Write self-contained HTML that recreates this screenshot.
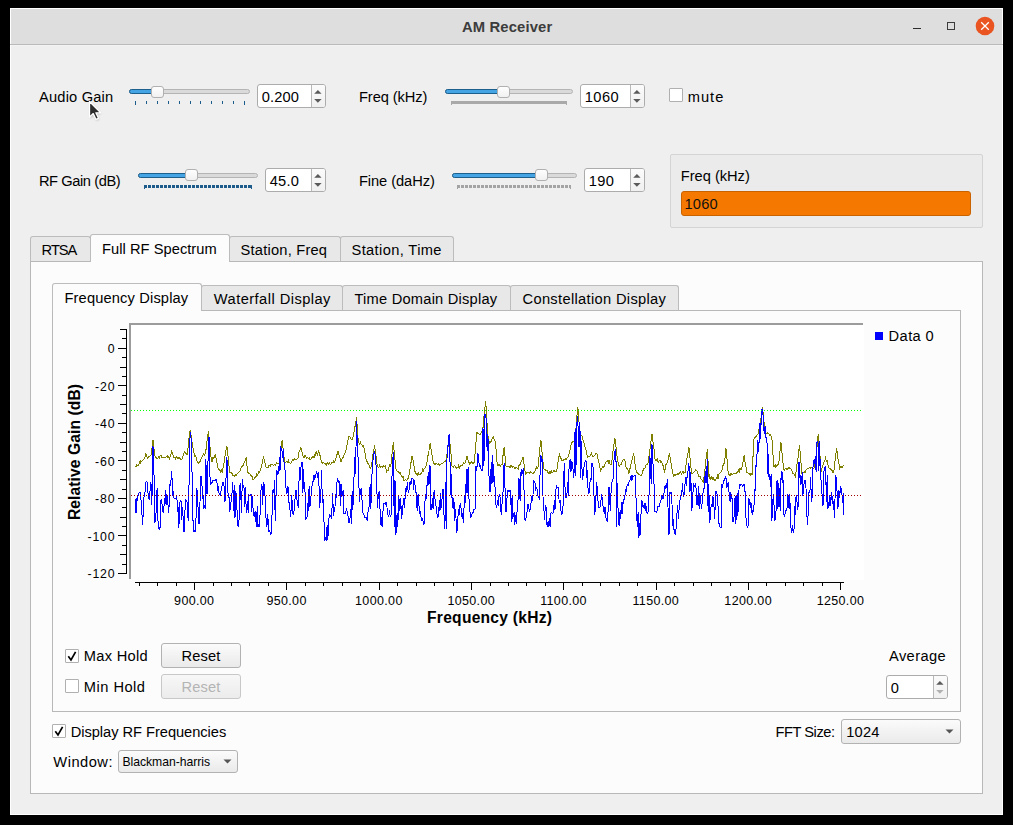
<!DOCTYPE html>
<html><head><meta charset="utf-8">
<style>
html,body{margin:0;padding:0;width:1013px;height:825px;background:#000;overflow:hidden}
body{font-family:"Liberation Sans",sans-serif;color:#000;position:relative}
.a{position:absolute}
.t{position:absolute;white-space:nowrap;line-height:1;color:#000}
.spin{position:absolute;background:#fff;border:1px solid #acacac;border-radius:3px;box-sizing:border-box}
.groove{position:absolute;height:5px;border-radius:3px;background:#dadada;border:1px solid #b4b4b4;box-sizing:border-box}
.fill{position:absolute;height:5px;border-radius:3px;background:#45a4e4;border:1px solid #1d5f8d;box-sizing:border-box}
.handle{position:absolute;width:13px;height:12px;border-radius:3px;background:linear-gradient(#fefefe,#f1f1f1);border:1px solid #b0b0b0;box-sizing:border-box}
.cb{position:absolute;width:14px;height:14px;background:#fff;border:1px solid #b0b0b0;box-sizing:border-box;border-radius:1px}
.tab{position:absolute;background:#e8e8e8;border:1px solid #bcbcbc;border-bottom:none;border-radius:3px 3px 0 0;box-sizing:border-box}
.tab.sel{background:#fcfcfc}
.panel{position:absolute;background:#fcfcfc;border:1px solid #b8b8b8;box-sizing:border-box}
.btn{position:absolute;background:linear-gradient(#fbfbfb,#eaeaea);border:1px solid #b2b2b2;border-radius:3px;box-sizing:border-box}
</style></head><body>
<div class="a" style="left:10px;top:8px;width:993px;height:807px;background:#fff"></div>
<div class="a" style="left:11px;top:9px;width:991px;height:805px;background:#efefef"></div>
<div class="a" style="left:11px;top:9px;width:991px;height:35px;background:#dedede"></div>
<div class="a" style="left:10px;top:44px;width:993px;height:1px;background:#bababa"></div>
<div class="a" style="left:11px;top:45px;width:991px;height:1px;background:#f3f3f3"></div>

<div class="t" style="left:462.0px;top:20.47px;font-size:14.8px;font-weight:700;color:#3c3c3c;letter-spacing:0.137px;">AM Receiver</div>
<div class="a" style="left:913px;top:28px;width:8px;height:1px;background:#2c2c2c"></div>
<div class="a" style="left:947px;top:22px;width:8px;height:8px;border:1px solid #3c3c3c;box-sizing:border-box"></div>
<svg class="a" style="left:975px;top:16px" width="20" height="20"><circle cx="10" cy="10" r="9.3" fill="#e95420"/><path d="M6.2 6.2 L13.8 13.8 M13.8 6.2 L6.2 13.8" stroke="#fff" stroke-width="1.3"/></svg>
<div class="t" style="left:39.0px;top:90.28px;font-size:14.67px;font-weight:400;color:#000;letter-spacing:0.187px;">Audio Gain</div>
<div class="groove" style="left:129px;top:89px;width:121px"></div>
<div class="fill" style="left:129px;top:89px;width:26px"></div>
<div class="handle" style="left:151px;top:86px"></div>
<div class="a" style="left:135.0px;top:101px;width:1px;height:4px;background:#1d5c8a"></div><div class="a" style="left:145.9px;top:101px;width:1px;height:3px;background:#1d5c8a"></div><div class="a" style="left:156.8px;top:101px;width:1px;height:3px;background:#1d5c8a"></div><div class="a" style="left:167.7px;top:101px;width:1px;height:3px;background:#1d5c8a"></div><div class="a" style="left:178.6px;top:101px;width:1px;height:3px;background:#1d5c8a"></div><div class="a" style="left:189.5px;top:101px;width:1px;height:3px;background:#1d5c8a"></div><div class="a" style="left:200.4px;top:101px;width:1px;height:3px;background:#1d5c8a"></div><div class="a" style="left:211.3px;top:101px;width:1px;height:3px;background:#1d5c8a"></div><div class="a" style="left:222.2px;top:101px;width:1px;height:3px;background:#1d5c8a"></div><div class="a" style="left:233.1px;top:101px;width:1px;height:3px;background:#1d5c8a"></div><div class="a" style="left:244.0px;top:101px;width:1px;height:4px;background:#1d5c8a"></div>
<div class="spin" style="left:257px;top:84px;width:69px;height:24px"></div>
<div class="a" style="left:311px;top:85px;width:14px;height:22px;background:linear-gradient(#fbfbfb,#f0f0f0);border-left:1px solid #b8b8b8;border-radius:0 2px 2px 0;box-sizing:border-box"></div>
<svg class="a" style="left:311px;top:84px" width="15" height="24"><polygon points="3.199999999999977,9.7 10.599999999999977,9.7 6.899999999999977,6.0" fill="#5a5a5a"/><polygon points="3.199999999999977,15.1 10.599999999999977,15.1 6.899999999999977,18.8" fill="#5a5a5a"/></svg>
<div class="t" style="left:261.7px;top:90.18px;font-size:14.67px;font-weight:400;color:#000;letter-spacing:0.128px;">0.200</div>
<div class="t" style="left:359.0px;top:90.38px;font-size:14.67px;font-weight:400;color:#000;letter-spacing:-0.080px;">Freq (kHz)</div>
<div class="groove" style="left:445px;top:89px;width:128px"></div>
<div class="fill" style="left:445px;top:89px;width:56px"></div>
<div class="handle" style="left:497px;top:86px"></div>
<div class="a" style="left:451px;top:101px;width:116px;height:3px;background:#a9a9a9"></div><div class="a" style="left:451px;top:101px;width:1px;height:4px;background:#a9a9a9"></div><div class="a" style="left:566px;top:101px;width:1px;height:4px;background:#a9a9a9"></div>
<div class="spin" style="left:580px;top:84px;width:65px;height:24px"></div>
<div class="a" style="left:630px;top:85px;width:14px;height:22px;background:linear-gradient(#fbfbfb,#f0f0f0);border-left:1px solid #b8b8b8;border-radius:0 2px 2px 0;box-sizing:border-box"></div>
<svg class="a" style="left:630px;top:84px" width="15" height="24"><polygon points="3.199999999999977,9.7 10.599999999999977,9.7 6.899999999999977,6.0" fill="#5a5a5a"/><polygon points="3.199999999999977,15.1 10.599999999999977,15.1 6.899999999999977,18.8" fill="#5a5a5a"/></svg>
<div class="t" style="left:584.7px;top:90.18px;font-size:14.67px;font-weight:400;color:#000;letter-spacing:0.464px;">1060</div>
<div class="cb" style="left:669px;top:88px;width:14px;height:14px"></div>
<div class="t" style="left:687.7px;top:89.58px;font-size:14.67px;font-weight:400;color:#000;letter-spacing:1.035px;">mute</div>
<div class="t" style="left:38.9px;top:174.48px;font-size:14.67px;font-weight:400;color:#000;letter-spacing:-0.412px;">RF Gain (dB)</div>
<div class="groove" style="left:138px;top:173px;width:120px"></div>
<div class="fill" style="left:138px;top:173px;width:51px"></div>
<div class="handle" style="left:185px;top:169px"></div>
<div class="a" style="left:144px;top:185px;width:108px;height:3px;background:repeating-linear-gradient(90deg,#1d5c8a 0 3px,transparent 3px 4px)"></div><div class="a" style="left:144px;top:185px;width:1px;height:4px;background:#1d5c8a"></div><div class="a" style="left:251px;top:185px;width:1px;height:4px;background:#1d5c8a"></div>
<div class="spin" style="left:265px;top:168px;width:61px;height:24px"></div>
<div class="a" style="left:311px;top:169px;width:14px;height:22px;background:linear-gradient(#fbfbfb,#f0f0f0);border-left:1px solid #b8b8b8;border-radius:0 2px 2px 0;box-sizing:border-box"></div>
<svg class="a" style="left:311px;top:168px" width="15" height="24"><polygon points="3.199999999999977,9.7 10.599999999999977,9.7 6.899999999999977,6.0" fill="#5a5a5a"/><polygon points="3.199999999999977,15.1 10.599999999999977,15.1 6.899999999999977,18.8" fill="#5a5a5a"/></svg>
<div class="t" style="left:269.7px;top:174.18px;font-size:14.67px;font-weight:400;color:#000;letter-spacing:0.223px;">45.0</div>
<div class="t" style="left:358.9px;top:174.48px;font-size:14.67px;font-weight:400;color:#000;letter-spacing:-0.066px;">Fine (daHz)</div>
<div class="groove" style="left:452px;top:173px;width:125px"></div>
<div class="fill" style="left:452px;top:173px;width:87px"></div>
<div class="handle" style="left:535px;top:169px"></div>
<div class="a" style="left:457px;top:185px;width:114px;height:3px;background:repeating-linear-gradient(90deg,#a4a4a4 0 3px,transparent 3px 4px)"></div><div class="a" style="left:457px;top:185px;width:1px;height:4px;background:#a4a4a4"></div><div class="a" style="left:570px;top:185px;width:1px;height:4px;background:#a4a4a4"></div>
<div class="spin" style="left:584px;top:168px;width:61px;height:24px"></div>
<div class="a" style="left:630px;top:169px;width:14px;height:22px;background:linear-gradient(#fbfbfb,#f0f0f0);border-left:1px solid #b8b8b8;border-radius:0 2px 2px 0;box-sizing:border-box"></div>
<svg class="a" style="left:630px;top:168px" width="15" height="24"><polygon points="3.199999999999977,9.7 10.599999999999977,9.7 6.899999999999977,6.0" fill="#5a5a5a"/><polygon points="3.199999999999977,15.1 10.599999999999977,15.1 6.899999999999977,18.8" fill="#5a5a5a"/></svg>
<div class="t" style="left:588.7px;top:174.18px;font-size:14.67px;font-weight:400;color:#000;letter-spacing:0.366px;">190</div>
<div class="a" style="left:670px;top:154px;width:313px;height:74px;background:#ebebeb;border:1px solid #d4d4d4;border-radius:2px;box-sizing:border-box"></div>
<div class="t" style="left:680.8px;top:169.38px;font-size:14.67px;font-weight:400;color:#000;letter-spacing:-0.024px;">Freq (kHz)</div>
<div class="a" style="left:681px;top:191px;width:290px;height:25px;background:#f57900;border:1px solid #c96300;border-radius:3px;box-sizing:border-box"></div>
<div class="t" style="left:684.4px;top:197.28px;font-size:14.67px;font-weight:400;color:#111;letter-spacing:0.230px;">1060</div>
<div class="panel" style="left:30px;top:261px;width:953px;height:533px"></div>
<div class="tab" style="left:30px;top:236px;width:61px;height:25px"></div>
<div class="tab" style="left:229px;top:236px;width:112px;height:25px"></div>
<div class="tab" style="left:340px;top:236px;width:114px;height:25px"></div>
<div class="tab sel" style="left:90px;top:234px;width:140px;height:28px"></div>
<div class="t" style="left:41.6px;top:243.38px;font-size:14.67px;font-weight:400;color:#000;letter-spacing:-1.009px;">RTSA</div>
<div class="t" style="left:102.0px;top:242.18px;font-size:14.67px;font-weight:400;color:#000;letter-spacing:0.046px;">Full RF Spectrum</div>
<div class="t" style="left:240.6px;top:243.38px;font-size:14.67px;font-weight:400;color:#000;letter-spacing:0.207px;">Station, Freq</div>
<div class="t" style="left:351.5px;top:243.38px;font-size:14.67px;font-weight:400;color:#000;letter-spacing:0.371px;">Station, Time</div>
<div class="panel" style="left:52px;top:310px;width:909px;height:402px"></div>
<div class="tab" style="left:201px;top:285px;width:142px;height:25px"></div>
<div class="tab" style="left:342px;top:285px;width:169px;height:25px"></div>
<div class="tab" style="left:510px;top:285px;width:169px;height:25px"></div>
<div class="tab sel" style="left:52px;top:283px;width:150px;height:28px"></div>
<div class="t" style="left:64.5px;top:291.48px;font-size:14.67px;font-weight:400;color:#000;letter-spacing:0.145px;">Frequency Display</div>
<div class="t" style="left:213.8px;top:291.58px;font-size:14.67px;font-weight:400;color:#000;letter-spacing:0.450px;">Waterfall Display</div>
<div class="t" style="left:354.5px;top:291.58px;font-size:14.67px;font-weight:400;color:#000;letter-spacing:0.215px;">Time Domain Display</div>
<div class="t" style="left:522.5px;top:291.58px;font-size:14.67px;font-weight:400;color:#000;letter-spacing:0.327px;">Constellation Display</div>
<svg class="a" style="left:0;top:0" width="1013" height="825">
<rect x="131" y="325" width="733" height="255" fill="#fff"/>
<rect x="129" y="323" width="734" height="2" fill="#9c9c9c"/>
<rect x="129" y="323" width="2" height="256" fill="#9c9c9c"/>
<polyline points="135.3,466.5 136.0,466.6 136.7,464.9 137.4,465.1 138.1,465.8 138.9,464.4 139.5,462.3 140.1,463.9 140.8,460.9 141.8,461.5 142.9,460.3 144.0,459.3 145.0,457.0 145.8,454.2 146.4,455.2 147.1,457.0 147.7,458.5 148.5,456.9 149.2,456.3 149.8,456.6 150.5,455.7 151.3,454.9 151.9,449.2 153.0,439.6 154.0,448.8 154.9,455.6 156.1,457.7 157.1,458.5 158.2,457.7 158.8,456.6 159.5,457.9 160.2,455.8 160.9,455.0 161.5,457.1 162.3,457.9 163.0,457.1 163.7,457.2 164.4,457.2 165.1,457.1 165.8,457.4 166.6,456.4 167.2,457.6 167.9,455.7 168.5,456.6 169.5,458.5 170.6,455.4 171.7,451.3 172.7,453.5 173.4,457.1 173.9,457.8 174.8,457.7 175.5,459.1 176.2,456.9 176.9,457.1 177.5,458.4 178.2,458.1 178.9,457.8 179.6,458.0 180.3,458.8 181.0,459.5 181.9,459.3 183.1,455.7 183.8,453.8 184.8,451.3 185.9,453.3 187.0,454.9 187.9,449.5 188.6,442.1 189.3,436.0 190.1,429.9 190.7,434.4 191.4,436.6 192.1,442.6 192.8,447.3 193.5,449.8 194.0,453.2 194.9,456.1 195.6,455.3 196.2,458.3 196.9,460.8 197.6,461.9 198.8,463.8 199.7,461.5 200.4,461.1 201.1,458.4 201.8,457.3 202.7,455.1 203.9,453.5 204.6,455.0 205.6,453.2 206.6,444.2 207.3,439.1 208.5,430.9 209.4,441.6 210.1,447.8 210.8,455.0 211.4,461.0 212.2,461.0 212.9,457.8 213.6,458.1 214.3,457.3 215.3,454.2 216.3,460.1 217.0,462.8 218.2,468.7 219.1,470.5 219.8,469.7 220.5,471.8 221.2,469.9 222.1,472.6 223.3,466.3 223.9,464.1 224.6,458.8 225.3,454.8 226.0,450.0 226.9,446.4 227.4,450.5 228.1,457.3 228.8,464.3 229.8,472.6 230.9,472.6 231.6,473.3 232.3,473.5 233.0,475.4 233.6,475.1 234.7,476.5 235.7,474.4 236.4,475.0 237.1,474.1 237.8,473.8 238.5,472.3 239.2,471.7 239.9,471.2 240.6,470.9 241.3,466.6 242.4,466.8 243.3,464.9 244.0,463.5 244.7,461.2 245.4,460.0 246.3,457.0 246.8,463.2 247.5,472.6 248.2,472.1 248.9,473.7 249.8,473.5 251.0,476.2 251.7,475.4 252.8,479.4 253.7,479.8 254.4,477.6 255.1,476.6 255.8,477.4 256.6,474.5 257.2,475.4 257.9,474.1 258.6,471.7 259.3,472.1 260.0,471.1 260.5,470.6 261.3,467.1 262.0,463.8 262.7,459.9 263.4,457.1 264.1,459.2 264.8,462.3 265.5,464.8 266.3,467.7 266.9,467.8 267.6,468.0 268.3,467.1 269.0,465.5 269.7,465.2 270.4,466.3 271.0,464.4 272.1,464.8 273.1,464.9 273.8,465.5 274.5,464.5 275.2,465.1 275.9,464.3 276.6,463.0 277.3,463.5 278.0,463.2 278.7,463.2 279.4,463.2 279.9,461.9 280.7,453.4 281.4,447.8 282.2,439.6 282.8,445.5 283.5,452.5 284.7,462.9 285.6,462.8 286.3,461.7 287.0,462.0 287.7,462.1 288.4,460.6 289.1,462.8 289.7,462.1 290.4,463.7 291.5,461.9 292.5,459.8 293.2,459.3 293.9,460.7 294.6,458.7 295.3,459.0 296.0,459.7 296.7,459.5 297.3,459.0 298.1,457.5 298.7,453.3 299.4,450.9 300.1,450.1 300.8,447.4 301.5,450.1 302.2,452.8 303.2,457.1 304.3,457.2 305.0,455.1 305.7,456.4 306.4,458.1 307.1,457.8 307.8,457.9 308.4,458.4 309.1,457.8 309.8,459.4 310.9,459.0 311.9,457.3 312.6,456.9 313.3,456.7 314.0,458.0 314.7,454.9 315.4,455.5 316.1,451.7 316.8,453.7 317.4,454.6 318.1,452.5 318.7,451.2 319.5,454.7 320.2,455.8 320.9,459.6 321.6,461.9 322.3,463.2 323.0,462.3 323.7,463.0 324.4,463.4 325.1,464.4 325.8,463.1 326.4,464.6 327.1,462.9 327.8,463.1 328.4,463.9 329.2,462.9 329.9,464.0 330.6,464.3 331.3,463.7 332.0,462.4 332.7,462.8 333.4,460.2 334.1,463.1 335.2,461.0 336.1,457.8 336.8,455.2 337.5,453.1 338.1,451.2 338.9,454.6 339.6,456.6 340.3,458.9 341.0,461.9 341.7,459.9 342.4,458.2 343.1,457.5 343.8,456.2 344.5,453.6 345.1,452.7 345.8,451.2 346.5,447.7 347.2,443.9 347.9,440.9 348.7,436.7 349.3,436.4 350.0,436.7 350.7,438.7 351.4,439.4 352.1,439.5 352.6,439.6 353.5,434.7 354.2,430.6 354.8,427.4 355.5,424.5 356.5,417.3 357.6,432.4 358.4,442.5 359.0,442.8 359.7,444.1 360.4,442.1 361.1,444.5 361.8,444.8 362.5,446.2 363.3,445.4 363.8,446.7 364.5,451.2 365.2,454.2 365.9,459.0 366.8,460.9 367.3,462.4 368.0,463.6 368.7,464.9 369.4,465.6 370.1,467.9 370.7,468.7 371.5,464.9 372.2,460.5 372.9,454.8 373.5,452.6 374.5,445.4 375.6,453.7 376.3,457.8 377.4,466.8 378.4,467.4 379.1,466.9 379.8,465.0 380.5,467.0 381.2,466.0 381.9,466.3 382.5,467.4 383.3,465.8 383.9,466.4 384.6,466.0 385.3,465.9 386.0,469.1 386.7,471.6 387.4,470.7 388.1,470.6 388.8,468.7 389.5,464.3 390.2,466.7 391.0,463.9 391.6,458.3 392.2,451.6 393.3,442.5 394.3,453.2 395.0,459.6 395.9,468.7 397.1,471.1 397.8,471.3 398.5,472.1 399.2,473.5 399.9,472.1 400.7,474.5 401.2,475.6 401.9,476.4 402.6,477.3 403.3,476.5 404.0,480.6 404.6,480.3 405.4,479.6 406.1,480.2 406.8,480.3 407.5,478.3 408.5,478.4 409.6,471.1 410.3,467.7 410.9,463.3 412.0,456.1 413.0,459.8 413.7,464.3 414.4,468.9 415.3,472.6 416.5,474.2 417.2,473.6 417.9,475.6 418.6,472.1 419.3,475.0 420.1,474.5 420.6,473.9 421.3,473.8 422.0,471.9 422.7,469.3 423.4,470.5 424.1,468.6 424.8,468.2 425.9,466.8 426.9,463.1 427.6,455.5 428.3,455.7 429.0,450.7 429.6,445.3 430.2,443.5 431.0,448.6 431.7,453.1 432.4,456.6 433.1,461.6 433.7,463.9 434.5,464.6 435.2,463.2 435.9,464.3 436.6,463.8 437.3,464.1 438.0,464.7 438.6,463.9 439.3,465.1 440.0,464.7 440.7,464.0 441.4,463.9 442.1,464.0 442.8,463.5 443.5,462.8 444.2,462.0 444.9,461.5 445.6,460.8 446.3,461.0 447.0,454.6 447.6,449.9 448.3,444.5 449.2,434.8 449.7,440.5 450.4,447.7 451.1,454.4 452.1,466.8 453.2,467.1 453.9,465.9 454.6,465.7 455.3,466.7 456.0,468.3 456.9,467.7 458.0,467.9 458.7,464.6 459.4,468.8 460.1,465.3 460.8,466.6 461.5,465.1 462.2,465.4 462.9,464.3 463.6,463.0 464.7,463.9 465.7,461.5 466.3,458.8 467.0,456.1 467.7,459.5 468.4,460.8 469.5,463.9 470.5,463.0 471.2,462.7 471.9,461.7 472.6,463.2 473.3,463.6 474.4,461.9 475.4,448.9 476.0,441.7 476.9,431.8 477.4,433.2 478.1,433.6 478.8,433.5 479.8,434.8 480.9,433.0 481.6,432.3 482.3,430.6 482.8,429.9 483.7,419.6 484.4,412.0 485.0,407.5 485.7,400.8 486.4,411.5 487.6,433.8 488.5,438.7 489.5,443.5 490.6,442.3 491.3,440.9 492.0,439.3 492.7,437.2 493.4,436.7 494.1,439.1 494.7,440.7 495.4,441.5 496.1,450.0 497.3,465.8 498.2,465.8 498.9,464.8 499.6,464.3 500.3,466.4 501.0,465.0 502.1,464.8 503.1,454.5 504.1,447.4 505.1,456.7 506.0,465.8 506.5,466.3 507.2,466.4 507.9,466.9 508.6,466.1 509.3,466.4 510.0,467.5 510.7,465.7 511.4,465.8 512.1,466.6 512.8,467.2 513.8,466.8 514.8,468.6 515.5,467.7 516.2,467.4 516.9,467.5 517.7,468.7 518.3,469.4 519.0,465.4 519.7,464.8 520.4,464.1 521.1,461.6 521.8,460.4 522.4,459.7 523.1,457.1 523.8,461.5 524.5,468.5 525.4,472.6 525.9,474.4 526.6,472.8 527.3,472.8 528.0,471.9 528.7,473.0 529.4,473.3 530.1,472.6 530.8,471.6 531.5,472.4 532.1,473.1 533.2,473.5 534.2,472.2 534.9,471.0 535.6,470.1 536.3,467.0 537.0,468.8 538.0,466.8 539.1,455.8 539.8,448.6 540.9,439.6 541.8,449.6 542.5,456.3 543.2,464.1 543.8,468.7 544.6,469.5 545.3,469.6 546.0,470.9 546.7,470.5 547.4,470.4 548.1,473.2 548.7,472.6 549.5,473.3 550.1,470.7 550.8,474.2 551.5,471.1 552.2,472.3 552.9,472.2 553.6,470.8 554.3,470.6 555.0,472.1 555.7,471.9 556.4,471.6 557.1,468.4 557.8,463.1 558.5,460.6 559.3,454.2 559.8,455.2 560.5,458.0 561.2,458.9 562.2,461.0 563.3,460.5 564.0,459.5 564.7,460.0 565.4,458.9 566.1,459.5 566.8,458.0 567.5,457.9 568.1,457.1 568.8,454.1 569.5,453.7 570.2,448.6 570.9,445.2 571.9,442.5 573.0,441.5 573.7,441.3 574.8,441.5 575.8,430.3 576.5,422.8 577.2,412.7 577.8,406.6 578.5,415.0 579.7,431.8 580.6,434.7 581.3,435.0 582.0,436.3 582.7,439.4 583.6,441.5 584.8,445.9 585.5,448.7 586.2,450.4 586.9,454.9 587.4,457.1 588.2,456.0 588.9,456.1 589.6,456.7 590.3,455.6 591.3,453.2 592.4,456.3 592.9,457.1 593.8,456.0 594.5,455.7 595.2,454.5 595.9,453.1 596.8,453.2 597.9,459.1 598.6,460.8 599.3,463.9 600.0,467.9 600.7,470.6 601.4,468.2 602.1,468.0 602.8,466.8 603.5,467.3 604.2,466.1 604.9,464.1 605.6,463.1 606.2,461.9 607.4,460.9 608.3,463.0 609.0,460.1 609.7,463.4 610.4,464.7 611.3,464.8 612.5,456.4 613.2,449.0 613.9,444.8 614.8,437.7 615.9,446.2 617.1,457.1 618.0,461.8 619.1,466.8 620.1,464.8 620.8,464.6 621.5,463.9 622.2,461.4 622.9,460.2 623.9,459.0 624.9,460.9 625.6,464.5 626.3,468.5 627.0,468.9 627.7,468.8 628.8,473.5 629.8,469.7 630.5,465.8 631.2,462.9 631.9,460.8 632.6,457.4 633.6,453.2 634.6,460.7 635.3,466.4 636.5,472.6 637.4,472.4 638.1,473.7 638.8,474.2 639.5,474.4 640.4,475.5 641.6,475.2 642.3,473.8 643.0,470.5 643.6,469.0 644.3,468.1 645.0,468.4 645.7,465.2 646.4,464.3 647.1,464.4 648.2,462.9 649.2,455.0 649.9,450.0 650.6,443.7 651.3,439.5 652.0,433.8 652.7,439.3 653.3,444.2 654.0,449.4 655.0,459.0 656.1,460.7 656.8,460.0 657.5,458.8 658.2,462.6 658.9,460.9 659.6,460.8 660.3,460.3 661.0,463.1 661.7,461.9 662.3,463.8 663.0,465.4 663.7,469.2 664.6,471.6 665.1,469.0 665.8,464.9 666.5,464.7 667.2,462.0 667.9,460.6 668.6,456.4 669.5,454.2 670.7,460.1 671.3,465.4 672.0,468.8 672.7,471.8 673.4,476.5 674.1,475.2 674.8,474.9 675.5,475.1 676.2,474.5 676.9,474.7 677.6,473.9 678.3,474.3 679.2,473.5 680.4,471.9 681.0,472.9 681.7,474.0 682.4,471.7 683.1,471.3 683.8,473.2 685.0,472.6 685.9,466.3 686.6,460.6 687.3,456.7 688.0,453.0 688.9,447.4 690.0,457.9 690.7,465.7 691.8,473.5 692.8,473.0 693.5,472.4 694.2,471.5 694.9,471.2 695.6,469.5 696.6,470.6 697.7,472.4 698.4,476.0 699.1,476.1 699.7,476.1 700.4,476.7 701.1,479.7 701.8,479.3 702.5,480.8 703.4,482.3 703.9,478.6 704.6,471.4 705.3,467.3 706.0,459.3 706.7,455.7 707.3,449.3 708.1,462.3 708.9,477.4 709.4,476.0 710.1,479.6 710.8,478.0 711.5,476.8 712.2,479.6 712.9,477.6 713.6,478.3 714.3,480.4 715.0,480.0 715.7,480.3 716.4,477.5 717.1,478.8 717.8,475.3 718.4,476.9 719.1,473.5 719.8,473.5 720.5,472.6 721.2,471.3 721.9,470.5 722.6,466.3 723.3,464.8 724.4,462.9 725.4,454.8 725.9,448.3 726.8,456.0 727.4,464.3 728.3,474.5 728.8,474.6 729.5,474.9 730.2,475.5 730.9,473.3 731.6,474.7 732.3,474.9 733.0,473.9 733.7,473.9 734.4,473.2 735.1,473.4 736.0,473.5 737.1,471.8 737.8,472.2 738.5,470.5 739.2,471.8 739.9,468.2 740.6,469.9 741.3,469.7 741.8,468.7 742.7,463.0 743.4,460.0 744.2,455.1 744.8,460.7 745.5,465.4 746.1,467.3 746.7,472.6 747.5,472.4 748.2,473.3 748.9,473.4 749.6,473.8 750.3,475.4 751.0,472.9 751.7,474.6 752.5,474.5 753.5,439.6 754.5,438.1 755.2,436.9 755.8,437.4 756.5,436.4 757.2,434.6 758.3,433.8 759.3,427.5 760.0,425.5 760.7,419.7 761.4,416.3 762.1,409.4 762.6,407.6 763.5,417.8 764.2,423.1 765.1,433.8 766.2,433.4 766.9,433.5 767.6,432.7 768.3,433.7 769.0,433.8 769.7,435.2 770.4,435.0 771.1,435.8 771.9,437.7 772.5,448.1 773.2,457.6 773.8,466.8 774.5,466.5 775.2,464.1 775.9,467.6 776.6,465.7 777.3,465.1 778.0,464.2 778.7,463.9 779.4,457.8 780.1,450.3 781.0,442.5 782.2,455.2 782.9,461.6 783.5,468.7 784.2,470.1 784.9,469.0 785.6,468.9 786.3,468.6 787.0,469.3 787.7,469.1 788.4,467.6 789.1,468.6 789.8,467.8 790.3,468.7 791.2,469.3 791.9,471.0 792.5,472.3 793.2,473.9 793.9,474.0 794.6,475.2 795.2,476.5 796.0,471.8 796.7,465.9 797.4,462.0 798.1,457.1 798.8,450.6 799.6,445.4 800.2,454.0 800.9,461.5 801.9,473.5 802.9,473.4 803.6,472.1 804.3,471.7 805.0,472.9 805.7,470.5 806.4,469.7 807.1,468.8 807.8,468.7 808.5,468.7 809.2,467.5 809.9,467.3 810.6,468.2 811.2,467.5 811.9,468.0 812.6,468.3 813.3,468.3 814.0,468.1 814.7,465.1 815.3,466.8 816.1,456.8 816.8,450.0 817.5,441.2 818.2,433.8 818.9,443.5 819.6,452.2 820.3,459.0 821.1,471.6 821.6,469.4 822.3,467.2 823.0,465.0 823.7,462.5 824.4,461.8 825.5,458.0 826.5,461.6 827.2,461.2 827.9,464.5 828.8,467.7 829.9,468.3 830.6,468.6 831.3,470.1 832.0,470.5 832.7,472.8 833.7,472.6 834.8,462.9 835.5,457.5 836.6,448.3 837.6,456.1 838.3,460.6 839.0,463.7 839.5,468.7 840.3,467.0 841.0,467.9 841.7,467.0 842.4,467.4 843.1,465.4 843.8,465.8" fill="none" stroke="#808000" stroke-width="1" shape-rendering="crispEdges"/>
<polyline points="135.3,499.3 136.0,513.1 136.7,498.0 137.4,501.4 138.2,494.2 138.8,493.1 139.5,492.7 140.4,492.7 141.5,505.5 142.6,524.7 144.0,497.1 145.0,492.3 145.7,482.6 146.2,481.1 147.1,482.4 147.8,489.9 148.4,498.5 149.2,499.1 149.8,493.1 151.0,482.5 151.3,502.9 151.9,504.9 152.6,446.6 153.5,447.6 154.9,523.3 156.1,511.9 157.1,487.6 158.2,527.8 159.3,529.1 160.2,527.1 160.9,500.7 161.5,500.0 162.3,506.2 162.9,511.6 163.7,512.1 164.4,497.8 165.1,504.1 165.8,489.8 166.5,504.8 167.2,494.7 167.9,503.6 168.8,513.1 169.9,484.3 170.6,485.9 171.7,470.9 172.7,494.2 173.4,492.8 174.1,498.9 174.6,498.5 175.5,498.5 176.2,497.4 176.8,495.6 177.5,511.7 178.2,507.3 178.9,527.6 179.6,504.7 180.3,500.8 181.1,501.5 181.7,520.4 182.4,506.8 183.1,517.3 184.0,532.0 185.2,506.3 185.9,499.8 187.0,501.5 188.2,521.1 189.3,472.3 190.1,433.8 190.7,431.8 191.4,445.2 192.1,476.2 192.8,515.8 193.5,531.8 194.2,531.8 195.0,529.8 195.6,531.8 196.2,512.1 196.9,488.3 197.6,496.0 198.3,515.2 199.0,523.7 199.7,521.3 200.4,476.4 201.1,476.4 201.7,478.4 202.5,498.3 203.2,497.4 203.9,508.5 204.6,506.5 205.2,508.5 205.9,459.1 206.6,492.7 207.3,494.2 208.5,438.6 209.4,436.6 210.1,482.1 210.8,484.3 211.4,482.3 212.2,482.2 212.9,480.7 213.6,480.1 214.3,480.9 215.3,480.3 216.3,479.5 217.0,482.6 217.7,490.7 218.4,486.0 219.2,494.9 219.8,494.1 220.5,496.3 221.2,488.5 221.9,486.7 222.6,483.2 223.1,482.3 223.9,484.0 225.0,501.7 226.0,478.4 226.9,457.0 227.4,470.4 228.1,496.5 228.8,493.6 229.8,512.3 230.9,502.0 231.6,501.0 232.3,487.0 232.8,482.3 233.6,510.5 234.3,484.7 235.0,518.0 235.7,491.2 236.4,494.4 237.6,524.9 238.5,526.9 239.2,517.9 239.9,485.4 240.6,482.7 241.3,512.8 242.4,479.4 243.3,487.9 244.0,487.4 244.7,507.1 245.4,487.5 246.3,512.3 246.9,511.4 247.5,501.0 248.2,513.2 248.9,494.8 250.0,495.9 251.0,493.9 251.7,511.6 252.3,496.1 253.0,508.4 253.7,514.9 254.4,516.8 255.1,510.8 255.8,519.8 256.5,526.9 257.2,506.3 257.9,526.9 258.6,524.9 259.3,526.9 260.0,515.8 260.7,497.7 261.3,484.1 262.0,485.6 262.7,505.4 263.4,482.2 264.0,484.2 264.8,485.7 265.4,515.2 266.2,518.4 266.9,527.3 267.6,514.3 268.3,523.3 269.0,531.4 269.7,530.7 270.4,533.7 271.2,531.7 271.7,533.7 272.4,491.4 273.1,490.2 273.8,492.4 274.5,480.2 275.2,520.8 275.9,501.5 276.6,470.4 277.3,475.3 278.0,471.6 278.7,473.6 279.4,457.4 280.0,471.0 280.7,447.3 281.8,449.3 282.8,458.1 283.5,448.9 284.2,466.0 284.9,468.4 285.7,482.3 286.3,493.8 287.0,493.4 287.7,486.6 288.4,487.2 289.1,504.5 289.7,504.5 290.4,516.5 291.1,509.8 291.8,495.1 292.5,511.9 293.5,515.2 294.6,506.5 295.4,492.0 296.0,490.0 296.7,496.4 297.4,503.5 298.3,507.5 299.4,466.6 300.1,480.1 301.2,463.9 302.2,461.9 302.9,493.0 303.6,468.6 304.3,491.9 305.0,491.8 305.7,519.2 306.4,518.2 307.0,517.2 307.8,503.3 308.4,511.3 309.1,485.9 309.8,507.1 310.5,503.8 311.2,492.9 311.9,486.8 312.9,482.3 314.0,474.6 314.7,478.5 315.4,477.2 316.1,473.7 316.8,471.8 317.4,474.9 318.1,478.0 318.7,471.6 319.5,508.2 320.2,501.5 320.9,492.3 321.6,469.6 322.3,503.3 323.0,499.2 323.7,507.1 324.4,540.5 325.5,538.5 326.4,540.5 327.1,525.1 327.8,540.0 328.5,526.1 329.2,514.7 330.3,515.2 331.3,517.2 332.0,508.1 332.7,492.6 333.4,516.2 334.1,510.3 334.8,512.2 335.5,494.0 336.1,498.0 336.8,484.1 337.5,478.3 338.1,480.3 338.9,482.6 339.6,481.0 340.3,505.5 341.0,483.8 341.7,496.7 342.4,494.0 343.1,490.4 343.8,513.4 344.5,513.4 345.1,513.4 345.8,511.4 346.5,509.4 347.2,512.2 347.9,514.3 348.6,522.0 349.7,522.0 350.7,509.0 351.4,524.0 352.1,491.4 352.8,510.4 353.6,492.0 354.2,470.7 354.8,457.4 355.5,473.7 356.5,421.2 357.6,449.8 358.3,461.8 359.4,501.7 360.4,490.9 361.3,488.1 362.5,508.3 363.3,515.2 363.8,513.8 364.5,517.8 365.2,518.0 365.9,517.3 366.8,519.1 367.3,521.1 368.0,511.7 368.7,509.1 369.4,505.0 370.1,484.2 370.8,508.5 371.6,486.2 372.2,469.2 372.9,461.4 373.5,455.3 374.5,451.2 375.6,458.0 376.3,469.5 377.4,507.5 378.4,493.8 379.4,491.0 380.5,522.9 381.3,525.9 381.9,516.6 382.5,527.4 383.2,504.2 384.2,503.6 385.3,504.1 386.0,502.1 386.7,502.2 387.4,514.1 388.1,515.1 388.8,516.9 389.5,510.4 390.2,516.9 391.0,515.2 391.6,491.4 392.2,469.5 393.3,452.2 394.3,526.7 395.0,480.0 395.9,534.6 397.1,513.3 397.8,527.3 398.8,495.9 399.9,511.2 400.6,498.2 401.7,519.1 402.6,508.7 403.3,502.5 404.0,498.2 404.7,508.2 405.4,489.0 406.5,491.0 407.5,482.2 408.2,493.0 408.9,491.9 409.6,483.0 410.3,482.3 410.9,485.0 412.0,478.4 413.0,479.2 413.7,489.5 414.4,480.1 415.1,485.5 416.2,493.9 417.2,510.9 417.9,495.8 418.6,494.5 419.3,513.8 419.9,510.4 421.1,517.2 422.0,521.1 422.7,518.3 423.4,524.0 424.0,525.0 424.8,503.6 425.5,494.2 426.2,499.2 426.9,486.2 427.6,482.4 428.3,472.5 429.0,484.6 429.6,464.8 430.2,466.8 431.0,509.7 431.7,509.4 432.4,498.0 433.1,509.2 433.8,492.6 434.6,490.0 435.2,503.6 435.9,504.4 436.6,511.4 437.6,517.2 438.6,516.8 439.3,500.2 440.0,511.1 440.7,493.1 441.4,508.1 442.1,497.5 442.8,489.7 443.4,490.0 444.3,526.9 444.9,528.9 445.6,481.8 446.3,528.9 447.0,458.7 447.6,450.6 448.8,435.7 449.7,433.7 450.4,495.4 451.1,473.9 452.1,499.7 453.2,509.1 453.9,497.7 454.6,521.2 455.3,508.6 456.0,518.4 456.9,532.7 458.0,515.8 458.7,508.9 459.4,514.7 460.1,503.6 460.8,505.6 461.5,512.1 462.2,519.4 462.9,512.8 463.7,523.0 464.3,494.7 465.0,503.3 465.7,483.9 466.3,492.8 467.0,468.7 467.7,492.6 468.4,466.7 469.1,503.4 469.8,510.3 470.5,517.2 471.2,516.7 471.9,514.3 472.6,513.1 473.3,512.3 474.0,508.9 475.0,509.4 476.0,466.2 476.7,471.4 477.9,453.2 478.8,462.1 479.5,466.5 480.2,465.6 480.8,468.7 481.6,470.7 482.3,470.7 483.0,427.8 483.7,465.8 484.4,454.7 485.0,414.3 485.7,416.3 486.4,419.6 487.1,450.5 487.8,434.1 488.6,453.2 489.2,486.7 490.1,492.0 491.3,462.1 492.0,484.1 492.8,455.1 493.4,479.9 494.1,481.7 494.7,476.1 495.4,499.2 496.3,507.5 496.8,507.0 497.5,500.2 498.2,505.9 499.2,493.9 500.3,497.9 501.2,515.2 502.4,499.2 503.1,491.2 504.1,462.9 505.1,489.9 506.0,511.4 506.5,511.2 507.2,493.1 507.9,490.3 508.9,492.0 510.0,490.0 510.7,490.0 511.4,521.8 512.1,495.3 512.8,518.8 513.4,514.2 514.1,513.2 514.7,524.9 515.5,514.7 516.2,524.3 516.9,513.8 517.7,501.7 518.3,498.9 519.0,478.3 519.7,498.4 520.4,499.5 521.1,468.6 521.8,475.7 522.5,470.6 523.1,469.8 523.8,479.5 524.5,515.5 525.2,521.1 525.8,519.1 526.6,515.8 527.3,509.0 528.0,504.5 528.7,506.7 529.4,512.4 530.1,509.4 531.2,501.7 532.1,495.9 532.8,500.7 533.5,480.3 534.1,482.3 534.9,481.2 535.6,491.2 536.3,487.4 537.0,488.5 538.0,495.9 539.1,497.9 539.8,480.0 540.9,455.1 541.8,461.0 542.5,460.2 543.2,509.5 543.8,507.5 544.6,519.9 545.3,505.5 546.0,506.4 546.7,523.1 547.4,526.7 548.1,521.5 548.7,526.9 549.5,517.7 550.1,527.2 550.8,513.4 551.5,512.4 552.5,513.3 553.6,512.2 554.3,499.7 555.0,509.8 555.7,491.5 556.4,486.1 557.1,487.0 557.8,487.1 558.4,488.1 559.2,502.8 559.8,501.0 560.5,500.5 561.2,514.4 562.2,513.3 563.3,503.1 564.2,462.9 565.4,497.9 566.1,495.9 566.8,497.9 567.5,481.8 568.2,496.3 568.8,471.0 569.5,464.1 570.2,458.9 570.9,472.0 571.9,460.9 573.0,468.7 573.9,478.4 575.1,428.8 575.8,476.0 576.5,438.9 577.2,416.3 577.8,418.3 578.5,445.2 579.2,446.9 579.9,422.3 580.6,478.2 581.3,441.2 582.0,468.5 582.6,480.3 583.4,472.3 584.5,462.9 585.5,460.9 586.2,461.8 586.9,477.6 587.5,470.2 588.2,494.0 589.4,492.0 590.3,477.6 591.0,480.7 591.9,462.9 593.1,467.5 593.8,491.0 594.8,515.2 595.9,496.4 596.8,482.3 597.9,499.4 598.7,507.5 599.3,507.9 600.0,507.0 600.7,503.4 601.6,493.9 602.8,503.3 603.5,511.2 604.2,512.3 604.9,506.9 605.6,511.1 606.2,520.9 607.4,521.1 608.3,507.8 609.0,487.0 609.7,501.0 610.4,510.6 611.3,484.2 612.5,480.9 613.2,478.5 613.9,460.8 614.8,451.2 615.9,449.2 616.6,526.9 617.3,483.3 618.5,524.9 619.4,525.3 620.1,509.6 620.8,519.2 621.5,502.3 622.2,513.6 623.0,501.7 623.6,503.7 624.3,496.5 624.9,495.8 625.6,489.2 626.3,492.2 627.0,486.4 627.8,484.2 628.4,486.2 629.1,481.0 629.8,480.3 630.5,478.2 631.2,474.8 631.9,480.8 632.6,475.8 633.3,476.6 634.2,475.5 635.3,475.8 636.5,513.3 637.4,527.3 638.1,511.6 638.8,537.6 639.5,522.6 640.0,535.6 640.9,517.0 641.6,499.7 642.3,501.7 643.0,506.9 643.6,505.7 644.3,509.3 645.0,503.0 645.7,509.4 646.4,507.8 647.1,513.4 648.2,511.4 649.2,491.6 649.9,455.7 650.6,472.5 651.3,484.1 652.0,444.5 652.7,463.6 653.3,465.2 654.0,483.9 655.0,511.4 656.1,511.2 656.8,512.2 657.5,507.4 658.2,506.1 658.9,507.0 659.8,503.6 661.0,500.4 661.7,495.9 662.3,496.6 663.0,499.0 663.7,493.9 664.4,491.2 665.1,484.9 665.8,488.3 666.5,487.9 667.5,479.4 668.5,534.6 669.3,533.7 670.0,492.0 670.7,493.6 671.4,492.0 672.0,504.1 672.7,525.8 673.4,519.4 674.1,530.9 675.3,534.6 676.2,527.1 676.9,514.0 677.6,505.5 678.3,518.6 679.2,507.5 680.4,496.7 681.0,495.4 681.7,495.5 682.4,483.1 683.1,493.5 683.8,496.9 685.0,484.2 685.9,476.7 686.6,486.2 687.3,471.2 688.0,471.4 688.9,462.9 690.0,491.9 690.7,471.7 691.8,511.4 692.8,495.4 693.5,484.2 694.7,486.2 695.6,484.2 696.3,490.6 697.0,505.0 697.7,501.9 698.4,486.2 699.1,509.1 699.7,492.7 700.4,497.3 701.5,509.4 702.5,499.8 703.4,488.1 703.9,490.1 704.6,483.3 705.3,471.4 706.0,483.1 706.7,472.8 707.3,459.0 708.1,511.7 708.7,484.3 709.8,523.0 710.8,508.0 711.5,503.8 712.2,506.7 712.8,495.9 713.6,500.1 714.7,519.1 715.7,491.6 716.6,492.0 717.8,497.0 718.4,520.4 719.5,525.9 720.5,527.9 721.2,527.5 721.9,484.4 722.6,487.9 723.4,480.3 724.0,480.6 724.7,478.2 725.4,478.4 725.9,476.5 726.8,488.4 727.4,485.1 728.1,482.4 729.2,493.9 730.2,502.3 730.9,493.7 731.6,494.8 732.3,501.1 733.0,521.7 733.7,522.0 734.4,512.0 735.1,495.7 735.8,524.0 736.5,508.8 737.1,492.7 737.8,515.7 738.5,504.6 739.2,484.2 739.9,486.2 740.6,485.0 741.3,484.6 742.0,485.2 742.7,486.0 743.4,485.0 744.1,484.2 744.7,484.2 745.5,502.4 746.1,521.3 746.7,524.9 747.5,526.9 748.2,525.3 748.9,498.9 749.6,499.7 750.3,508.4 751.0,502.5 751.5,511.4 752.4,513.4 753.1,509.6 753.8,512.3 754.5,489.0 755.2,490.8 755.8,464.8 756.4,466.8 757.2,450.1 757.9,440.1 758.6,451.5 759.3,437.7 760.0,423.1 760.7,439.3 761.4,408.7 762.1,412.3 762.6,409.5 763.5,421.2 764.2,433.6 764.8,428.1 765.5,425.6 766.1,439.6 766.9,437.6 767.6,474.0 768.3,453.7 769.0,476.5 769.7,474.5 770.4,486.7 771.1,474.5 771.8,521.3 772.5,511.4 773.2,494.3 773.9,501.9 774.8,521.1 775.9,516.2 776.7,482.3 777.3,480.3 778.0,508.5 778.7,483.4 779.4,493.2 780.2,511.4 780.8,480.5 781.6,470.6 782.2,483.3 782.9,472.2 783.5,512.7 784.5,517.2 785.6,511.0 786.3,509.9 787.0,508.4 787.7,493.9 788.4,495.9 789.1,509.4 789.8,493.9 790.5,524.1 791.2,530.0 791.9,532.8 792.5,525.2 793.2,530.8 793.9,532.8 794.6,506.0 795.3,515.4 796.0,496.9 796.7,494.8 797.4,509.9 798.1,506.2 798.8,462.7 799.6,462.9 800.2,485.1 800.9,475.3 801.6,483.8 802.2,472.0 802.9,495.9 803.6,486.5 804.3,482.2 805.0,480.3 805.8,482.3 806.4,499.8 807.1,519.4 807.8,525.0 808.5,493.9 809.2,491.0 809.9,492.4 810.6,477.0 811.2,495.0 811.9,502.4 812.6,476.5 813.3,460.0 814.0,464.1 814.7,461.2 815.4,456.2 816.1,471.9 816.8,442.4 817.5,441.7 818.2,443.5 818.9,470.7 819.6,441.5 820.3,471.2 821.3,484.2 822.3,497.9 823.0,505.6 823.7,474.0 824.4,468.4 825.5,466.8 826.5,502.3 827.2,474.8 827.9,509.4 828.6,502.0 829.3,505.5 829.9,495.2 830.6,505.5 831.7,492.0 832.7,503.9 833.4,500.8 834.6,518.2 835.5,474.8 836.0,476.5 836.9,486.4 837.5,509.4 838.3,506.3 839.0,490.5 839.6,498.2 840.5,486.2 841.0,489.9 841.7,488.1 842.4,503.4 843.1,493.5 843.8,515.2" fill="none" stroke="#0000ff" stroke-width="1.0" shape-rendering="crispEdges"/>
<line x1="131" y1="410.5" x2="862" y2="410.5" stroke="#00ff00" stroke-width="1" stroke-dasharray="1 2"/>
<line x1="131" y1="495.5" x2="862" y2="495.5" stroke="#a00000" stroke-width="1" stroke-dasharray="1 2"/>
<g fill="#000" shape-rendering="crispEdges">
<rect x="126" y="329" width="1" height="245"/>
<rect x="120" y="329" width="6" height="1"/>
<rect x="122" y="338" width="4" height="1"/>
<rect x="118" y="348" width="8" height="1"/>
<rect x="122" y="357" width="4" height="1"/>
<rect x="120" y="367" width="6" height="1"/>
<rect x="122" y="376" width="4" height="1"/>
<rect x="118" y="385" width="8" height="1"/>
<rect x="122" y="395" width="4" height="1"/>
<rect x="120" y="404" width="6" height="1"/>
<rect x="122" y="413" width="4" height="1"/>
<rect x="118" y="423" width="8" height="1"/>
<rect x="122" y="432" width="4" height="1"/>
<rect x="120" y="442" width="6" height="1"/>
<rect x="122" y="451" width="4" height="1"/>
<rect x="118" y="460" width="8" height="1"/>
<rect x="122" y="470" width="4" height="1"/>
<rect x="120" y="479" width="6" height="1"/>
<rect x="122" y="489" width="4" height="1"/>
<rect x="118" y="498" width="8" height="1"/>
<rect x="122" y="507" width="4" height="1"/>
<rect x="120" y="517" width="6" height="1"/>
<rect x="122" y="526" width="4" height="1"/>
<rect x="118" y="535" width="8" height="1"/>
<rect x="122" y="545" width="4" height="1"/>
<rect x="120" y="554" width="6" height="1"/>
<rect x="122" y="564" width="4" height="1"/>
<rect x="118" y="573" width="8" height="1"/>
<rect x="135" y="582" width="709" height="1"/>
<rect x="139" y="583" width="1" height="3"/>
<rect x="157" y="583" width="1" height="3"/>
<rect x="176" y="583" width="1" height="3"/>
<rect x="194" y="583" width="1" height="7"/>
<rect x="213" y="583" width="1" height="3"/>
<rect x="231" y="583" width="1" height="3"/>
<rect x="249" y="583" width="1" height="3"/>
<rect x="268" y="583" width="1" height="3"/>
<rect x="286" y="583" width="1" height="7"/>
<rect x="305" y="583" width="1" height="3"/>
<rect x="323" y="583" width="1" height="3"/>
<rect x="342" y="583" width="1" height="3"/>
<rect x="360" y="583" width="1" height="3"/>
<rect x="379" y="583" width="1" height="7"/>
<rect x="397" y="583" width="1" height="3"/>
<rect x="416" y="583" width="1" height="3"/>
<rect x="434" y="583" width="1" height="3"/>
<rect x="453" y="583" width="1" height="3"/>
<rect x="471" y="583" width="1" height="7"/>
<rect x="490" y="583" width="1" height="3"/>
<rect x="508" y="583" width="1" height="3"/>
<rect x="526" y="583" width="1" height="3"/>
<rect x="545" y="583" width="1" height="3"/>
<rect x="563" y="583" width="1" height="7"/>
<rect x="582" y="583" width="1" height="3"/>
<rect x="600" y="583" width="1" height="3"/>
<rect x="619" y="583" width="1" height="3"/>
<rect x="637" y="583" width="1" height="3"/>
<rect x="656" y="583" width="1" height="7"/>
<rect x="674" y="583" width="1" height="3"/>
<rect x="693" y="583" width="1" height="3"/>
<rect x="711" y="583" width="1" height="3"/>
<rect x="730" y="583" width="1" height="3"/>
<rect x="748" y="583" width="1" height="7"/>
<rect x="766" y="583" width="1" height="3"/>
<rect x="785" y="583" width="1" height="3"/>
<rect x="803" y="583" width="1" height="3"/>
<rect x="822" y="583" width="1" height="3"/>
<rect x="840" y="583" width="1" height="7"/>
</g>
<rect x="875" y="332" width="8" height="8" fill="#0000ff"/>
</svg>
<div class="t" style="left:60px;width:55.3px;text-align:right;top:343.09px;font-size:12.3px;letter-spacing:0.8px">0</div>
<div class="t" style="left:60px;width:55.3px;text-align:right;top:380.62px;font-size:12.3px;letter-spacing:0.8px">-20</div>
<div class="t" style="left:60px;width:55.3px;text-align:right;top:418.16px;font-size:12.3px;letter-spacing:0.8px">-40</div>
<div class="t" style="left:60px;width:55.3px;text-align:right;top:455.70px;font-size:12.3px;letter-spacing:0.8px">-60</div>
<div class="t" style="left:60px;width:55.3px;text-align:right;top:493.24px;font-size:12.3px;letter-spacing:0.8px">-80</div>
<div class="t" style="left:60px;width:55.3px;text-align:right;top:530.78px;font-size:12.3px;letter-spacing:0.8px">-100</div>
<div class="t" style="left:60px;width:55.3px;text-align:right;top:568.32px;font-size:12.3px;letter-spacing:0.8px">-120</div>
<div class="t" style="left:154.08px;width:80px;text-align:center;top:595.32px;font-size:12.5px;letter-spacing:0.35px;text-indent:0.35px">900.00</div>
<div class="t" style="left:246.40px;width:80px;text-align:center;top:595.32px;font-size:12.5px;letter-spacing:0.35px;text-indent:0.35px">950.00</div>
<div class="t" style="left:338.72px;width:80px;text-align:center;top:595.32px;font-size:12.5px;letter-spacing:0.35px;text-indent:0.35px">1000.00</div>
<div class="t" style="left:431.04px;width:80px;text-align:center;top:595.32px;font-size:12.5px;letter-spacing:0.35px;text-indent:0.35px">1050.00</div>
<div class="t" style="left:523.35px;width:80px;text-align:center;top:595.32px;font-size:12.5px;letter-spacing:0.35px;text-indent:0.35px">1100.00</div>
<div class="t" style="left:615.67px;width:80px;text-align:center;top:595.32px;font-size:12.5px;letter-spacing:0.35px;text-indent:0.35px">1150.00</div>
<div class="t" style="left:707.99px;width:80px;text-align:center;top:595.32px;font-size:12.5px;letter-spacing:0.35px;text-indent:0.35px">1200.00</div>
<div class="t" style="left:800.31px;width:80px;text-align:center;top:595.32px;font-size:12.5px;letter-spacing:0.35px;text-indent:0.35px">1250.00</div>
<div class="t" style="left:427.1px;top:610.19px;font-size:15.6px;font-weight:700;letter-spacing:0.25px">Frequency (kHz)</div>
<div class="t" style="left:75.3px;top:451.5px;font-size:15.6px;font-weight:700;letter-spacing:0.1px;transform:translate(-50%,-50%) rotate(-90deg);transform-origin:center;left:74.6px">Relative Gain (dB)</div>
<div class="t" style="left:888.6px;top:329.28px;font-size:14.67px;letter-spacing:0.4px">Data 0</div>
<div class="cb" style="left:65px;top:649px;width:14px;height:14px"></div>
<svg class="a" style="left:65px;top:649px" width="14" height="14"><path d="M3.3 7.2 L6 11 L10.6 2.8" stroke="#000" stroke-width="1.7" fill="none"/></svg>
<div class="t" style="left:83.8px;top:648.98px;font-size:14.67px;font-weight:400;color:#000;letter-spacing:0.271px;">Max Hold</div>
<div class="btn" style="left:161px;top:643px;width:80px;height:25px"></div>
<div class="t" style="left:181.6px;top:649.18px;font-size:14.67px;font-weight:400;color:#000;letter-spacing:0.126px;">Reset</div>
<div class="cb" style="left:65px;top:679px;width:14px;height:14px"></div>
<div class="t" style="left:83.8px;top:679.98px;font-size:14.67px;font-weight:400;color:#000;letter-spacing:0.479px;">Min Hold</div>
<div class="btn" style="left:161px;top:674px;width:80px;height:25px;background:linear-gradient(#f7f7f7,#ececec);border-color:#c8c8c8"></div>
<div class="t" style="left:181.6px;top:680.18px;font-size:14.67px;font-weight:400;color:#b4b4b4;letter-spacing:0.126px;">Reset</div>
<div class="t" style="left:889.0px;top:649.38px;font-size:14.67px;font-weight:400;color:#000;letter-spacing:0.379px;">Average</div>
<div class="spin" style="left:886px;top:675px;width:62px;height:24px"></div>
<div class="a" style="left:933px;top:676px;width:14px;height:22px;background:linear-gradient(#fbfbfb,#f0f0f0);border-left:1px solid #b8b8b8;border-radius:0 2px 2px 0;box-sizing:border-box"></div>
<svg class="a" style="left:933px;top:675px" width="15" height="24"><polygon points="3.199999999999977,9.7 10.599999999999977,9.7 6.899999999999977,6.0" fill="#5a5a5a"/><polygon points="3.199999999999977,15.1 10.599999999999977,15.1 6.899999999999977,18.8" fill="#b0b0b0"/></svg>
<div class="t" style="left:890.7px;top:681.18px;font-size:14.67px;font-weight:400;color:#000;">0</div>
<div class="cb" style="left:52px;top:724px;width:14px;height:14px"></div>
<svg class="a" style="left:52px;top:724px" width="14" height="14"><path d="M3.3 7.2 L6 11 L10.6 2.8" stroke="#000" stroke-width="1.7" fill="none"/></svg>
<div class="t" style="left:70.7px;top:724.88px;font-size:14.67px;font-weight:400;color:#000;letter-spacing:-0.038px;">Display RF Frequencies</div>
<div class="t" style="left:53.3px;top:754.88px;font-size:14.67px;font-weight:400;color:#000;letter-spacing:0.499px;">Window:</div>
<div class="btn" style="left:118px;top:750px;width:120px;height:23px"></div>
<div class="t" style="left:122.5px;top:756.17px;font-size:12.2px;font-weight:400;color:#000;letter-spacing:-0.039px;">Blackman-harris</div>
<svg class="a" style="left:220.8px;top:757px" width="14" height="10"><polygon points="2.5,2.5 10.5,2.5 6.5,6.5" fill="#555"/></svg>
<div class="t" style="left:775.5px;top:724.88px;font-size:14.67px;font-weight:400;color:#000;letter-spacing:-0.469px;">FFT Size:</div>
<div class="btn" style="left:841px;top:719px;width:120px;height:25px"></div>
<div class="t" style="left:846.2px;top:724.88px;font-size:14.67px;font-weight:400;color:#000;letter-spacing:0.197px;">1024</div>
<svg class="a" style="left:942.8px;top:727px" width="14" height="10"><polygon points="2.5,2.5 10.5,2.5 6.5,6.5" fill="#555"/></svg>
<svg class="a" style="left:86px;top:99px" width="20" height="24"><defs><filter id="sh" x="-50%" y="-50%" width="200%" height="200%"><feGaussianBlur stdDeviation="0.8"/></filter></defs><g transform="translate(3.5,2.5) scale(1.1)"><path d="M0 0 L0 14.2 L3.4 11 L5.9 16.3 L8.2 15.3 L5.8 10.3 L10.2 10.3 Z" fill="#000" opacity="0.25" transform="translate(0.6,1)" filter="url(#sh)"/><path d="M0 0 L0 14.2 L3.4 11 L5.9 16.3 L8.2 15.3 L5.8 10.3 L10.2 10.3 Z" fill="#2e2e2e" stroke="#fff" stroke-width="1.2" stroke-linejoin="round"/></g></svg>

</body></html>
